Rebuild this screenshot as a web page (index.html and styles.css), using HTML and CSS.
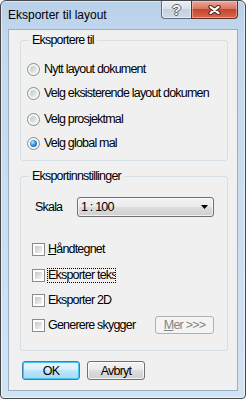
FILE: index.html
```html
<!DOCTYPE html>
<html>
<head>
<meta charset="utf-8">
<link rel="stylesheet" href="styles.css">
</head>
<body>
<div class="window">
  <div class="titlebar">
    <span class="title">Eksporter til layout</span>
    <div class="caption">
      <div class="cbtn help"><span class="q">?</span></div>
      <div class="cbtn close">
        <svg width="13" height="10" viewBox="0 0 13 10">
          <path d="M2.5 1.8 L10.5 8.2 M10.5 1.8 L2.5 8.2" stroke="#4a2018" stroke-width="4.2" stroke-linecap="round" fill="none"/>
          <path d="M2.5 1.8 L10.5 8.2 M10.5 1.8 L2.5 8.2" stroke="#ffffff" stroke-width="2.2" stroke-linecap="round" fill="none"/>
        </svg>
      </div>
    </div>
  </div>
  <div class="client">
    <fieldset class="group g1">
      <legend>Eksportere til</legend>
      <div class="radio-list">
        <div class="radio"><span class="rb"></span><span>Nytt layout dokument</span></div>
        <div class="radio"><span class="rb"></span><span>Velg eksisterende layout dokumen</span></div>
        <div class="radio r3"><span class="rb"></span><span>Velg prosjektmal</span></div>
        <div class="radio"><span class="rb on"></span><span>Velg global mal</span></div>
      </div>
    </fieldset>
    <fieldset class="group g2">
      <legend>Eksportinnstillinger</legend>
      <div class="skala-row">
        <span class="skala-label">Skala</span>
        <div class="combo">
          <span class="combo-text">1 : 100</span>
          <svg width="7" height="4" viewBox="0 0 7 4"><path d="M0 0H7L3.5 4Z" fill="#000"/></svg>
        </div>
      </div>
      <div class="checks">
        <div class="check"><span class="cb"></span><span class="ct"><u>H</u>åndtegnet</span></div>
        <div class="check c2"><span class="cb"></span><span class="focus">Eksporter tekst</span></div>
        <div class="check"><span class="cb"></span><span class="ct">Eksporter 2D</span></div>
        <div class="check"><span class="cb"></span><span class="ct">Generere skygger</span><span class="btn more"><u>M</u>er &gt;&gt;&gt;</span></div>
      </div>
    </fieldset>
    <div class="actions">
      <span class="btn ok">OK</span>
      <span class="btn cancel">Avbryt</span>
    </div>
  </div>
</div>
</body>
</html>
```
FILE: styles.css
```css
* { box-sizing: border-box; }
html, body { margin: 0; padding: 0; }
body {
  width: 246px;
  height: 399px;
  overflow: hidden;
  background: #ffffff;
  font-family: "Liberation Sans", Arial, sans-serif;
  font-size: 12.5px;
  letter-spacing: -0.8px;
  color: #000;
}
.window {
  width: 246px;
  height: 399px;
  border: 1px solid #474747;
  border-radius: 6px 6px 4px 4px;
  background: linear-gradient(#b9d0ea, #c4d9ef 40px, #d2e3f4);
  box-shadow: inset 0 0 0 1px rgba(255,255,255,0.55);
  padding: 0 7px 7px;
  display: flex;
  flex-direction: column;
}
.titlebar {
  height: 28px;
  display: flex;
  align-items: flex-start;
}
.title {
  font-size: 12px;
  letter-spacing: 0;
  color: #000;
  line-height: 15px;
  padding-top: 7px;
}
.caption {
  margin-left: auto;
  display: flex;
  height: 18px;
}
.cbtn {
  height: 18px;
  display: flex;
  align-items: center;
  justify-content: center;
  border: 1px solid #5d6e83;
  border-top: none;
}
.help {
  width: 30px;
  border-right: none;
  border-radius: 0 0 0 4px;
  background: linear-gradient(#e8eef5, #d8e2ed 45%, #c3d1e0 50%, #cfdae7);
  box-shadow: inset 0 0 0 1px rgba(255,255,255,0.5);
}
.q {
  font-weight: bold;
  font-size: 15px;
  letter-spacing: 0;
  line-height: 15px;
  color: #f4f6f8;
  text-shadow: 1px 0 0 #56606c, -1px 0 0 #56606c, 0 1px 0 #56606c, 0 -1px 0 #56606c;
}
.close {
  width: 47px;
  border-color: #6a2a20;
  border-radius: 0 0 4px 0;
  background: linear-gradient(#eaa999, #d97562 45%, #c7442c 50%, #d26a50);
  box-shadow: inset 0 0 0 1px rgba(255,220,210,0.45);
}
.client {
  flex: 1;
  background: #f0f0f0;
  border: 1px solid #9aadc2;
  display: flex;
  flex-direction: column;
}
.group {
  margin: 3px 9px 0 11px;
  padding: 13px 13px 9px 0;
  border: 1px solid #d5dfe5;
  border-radius: 3px;
  min-width: 0;
}
.group legend {
  margin-left: 8px;
  padding: 0 3px;
  line-height: 15px;
}
.g2 {
  margin-top: 8px;
  padding: 13px 13px 17px 0;
}
.radio-list {
  display: flex;
  flex-direction: column;
  gap: 8px;
  padding-left: 6px;
}
.radio {
  display: flex;
  align-items: center;
  height: 16px;
  gap: 4px;
  white-space: nowrap;
}
.r3 { margin-top: 2px; }
.rb {
  width: 13px;
  height: 13px;
  border-radius: 50%;
  border: 1px solid #8a8b8b;
  background: #f5f5f5;
  display: flex;
  align-items: center;
  justify-content: center;
  flex: none;
}
.rb::after {
  content: "";
  width: 7px;
  height: 7px;
  border-radius: 50%;
  background: linear-gradient(135deg, #c4c4c4, #f2f2f2);
}
.rb.on::after {
  background: radial-gradient(circle at 38% 35%, #c8ecff 0, #3b9be0 40%, #0b4f93 100%);
}
.skala-row {
  display: flex;
  align-items: center;
  padding-left: 14px;
  height: 20px;
}
.skala-label { width: 42px; }
.combo {
  width: 137px;
  height: 20px;
  border: 1px solid #707070;
  border-radius: 3px;
  background: linear-gradient(#f2f2f2, #ebebeb 50%, #dddddd 50%, #cfcfcf);
  box-shadow: inset 0 0 0 1px rgba(255,255,255,0.7);
  display: flex;
  align-items: center;
  padding: 0 5px 0 3px;
  margin-left: auto;
}
.combo-text { flex: 1; }
.checks {
  margin-top: 24px;
  display: flex;
  flex-direction: column;
  gap: 9px;
  padding-left: 11px;
}
.check {
  display: flex;
  align-items: center;
  height: 16px;
  white-space: nowrap;
}
.c2 { margin-top: 1px; }
.cb {
  width: 13px;
  height: 13px;
  border: 1px solid #8a8b8b;
  background: #ffffff;
  padding: 2px;
  flex: none;
}
.cb::after {
  content: "";
  display: block;
  width: 7px;
  height: 7px;
  background: linear-gradient(135deg, #c2c7cd, #f6f6f6);
}
.ct { margin-left: 3px; }
.focus {
  margin-left: 2px;
  width: 69px;
  height: 15px;
  line-height: 13px;
  border: 1px dotted #000;
  overflow: hidden;
  white-space: nowrap;
}
.btn {
  display: flex;
  align-items: center;
  justify-content: center;
  height: 19px;
  border: 1px solid #707070;
  border-radius: 3px;
  background: linear-gradient(#f2f2f2, #ebebeb 50%, #dddddd 50%, #cfcfcf);
  box-shadow: inset 0 0 0 1px rgba(255,255,255,0.75);
}
.more {
  margin-left: auto;
  width: 59px;
  height: 18px;
  border-color: #adb2b5;
  background: #f4f4f4;
  box-shadow: none;
  color: #838383;
}
.actions {
  margin-top: 10px;
  padding-left: 13px;
  display: flex;
  gap: 7px;
}
.actions .btn { width: 58px; }
.ok {
  border-color: #3c7fb1;
  background: linear-gradient(#e9f5fc, #d8effb 50%, #bee6fd 50%, #a7d9f5);
  box-shadow: inset 0 0 0 1px #48c5f0;
}
```
